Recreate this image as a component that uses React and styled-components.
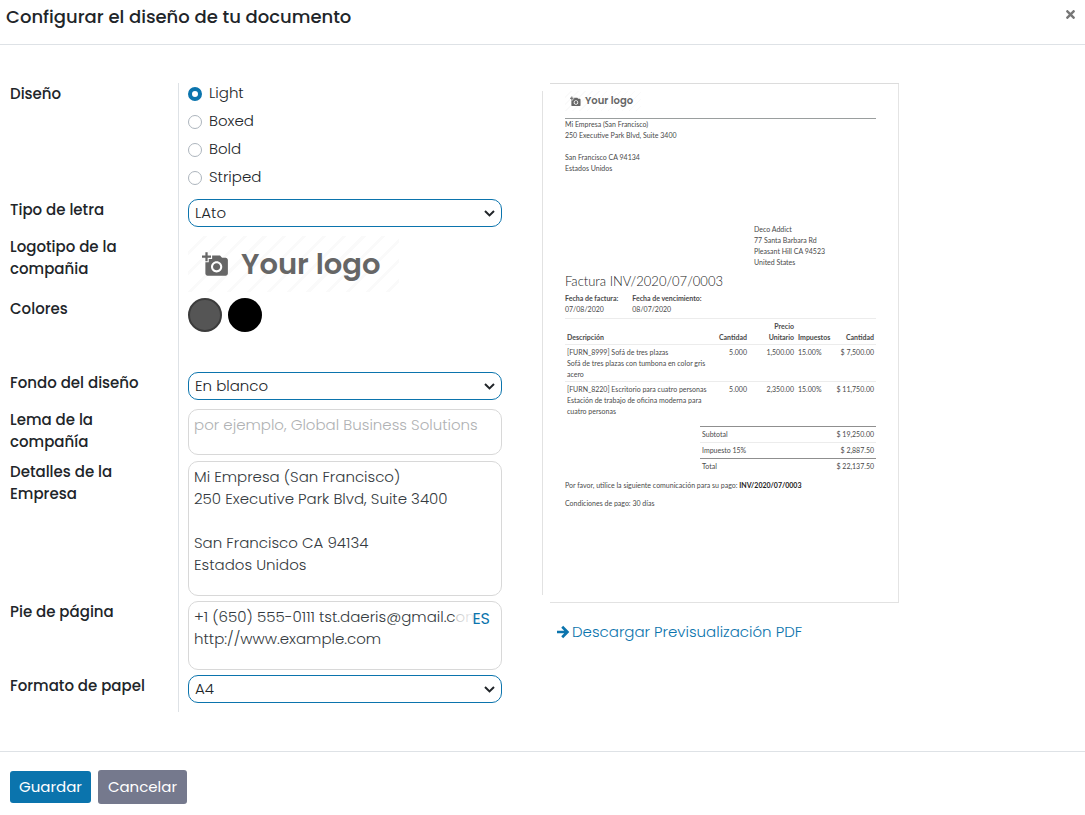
import React, { useState } from "react";
import styled, { createGlobalStyle } from "styled-components";
import { FaTimes } from "react-icons/fa";
import { MdAddAPhoto } from "react-icons/md";

const GlobalStyle = createGlobalStyle`
  *, *::before, *::after { box-sizing: border-box; }
  body {
    margin: 0;
    background: #fff;
    color: #212529;
    font-family: Poppins, Inter, "Liberation Sans", sans-serif;
    font-size: 15px;
    line-height: 22px;
    font-weight: 300;
  }
`;

const Dialog = styled.div`
  display: flex;
  flex-direction: column;
`;

const Header = styled.header`
  display: flex;
  justify-content: space-between;
  align-items: flex-start;
  padding: 5px 8px 15px 6px;
  border-bottom: 1px solid #dee2e6;
`;

const Title = styled.h1`
  margin: 0;
  font-size: 18px;
  line-height: 24px;
  font-weight: 500;
`;

const CloseButton = styled.button`
  display: flex;
  padding: 3px 0;
  border: 0;
  background: none;
  color: #777;
  font-size: 13px;
  cursor: pointer;
`;

const Body = styled.main`
  display: grid;
  grid-template-columns: 1fr 1fr;
  padding: 38px 1px 39px 0;
`;

const Form = styled.form`
  padding: 0 40px 0 10px;
`;

const Row = styled.div`
  display: grid;
  grid-template-columns: 168px minmax(0, 1fr);
`;

const rowLabel = `
  margin: 0;
  padding: 0 30px 0 0;
  font-size: 15px;
  font-weight: 500;
`;
const Label = styled.label`${rowLabel}`;
const GroupLabel = styled.span`${rowLabel}`;

const Field = styled.div`
  padding: 0 0 ${(p) => p.$space || 9}px 9px;
  border-left: 1px solid #dee2e6;
`;

const RadioList = styled.div`
  display: flex;
  flex-direction: column;
  gap: 8px;
`;

const RadioLabel = styled.label`
  display: flex;
  align-items: center;
  gap: 7px;
  line-height: 20px;
`;

const Radio = styled.input`
  appearance: none;
  width: 14px;
  height: 14px;
  margin: 2px 0 0;
  border: 1px solid #adb5bd;
  border-radius: 50%;
  background: #fff;
  &:checked {
    border: 4px solid #0b74ad;
  }
`;

const SelectBox = styled.div`
  display: grid;
  align-items: center;
  > * { grid-area: 1 / 1; }
  > svg {
    justify-self: end;
    margin-right: 7px;
    pointer-events: none;
  }
`;

const Select = styled.select`
  appearance: none;
  width: 100%;
  height: 28px;
  padding: 0 28px 0 6px;
  border: 1px solid #0b74ad;
  border-radius: 10px;
  background: #fff;
  color: #212529;
  font: inherit;
`;

const TextArea = styled.textarea`
  display: block;
  width: 100%;
  height: ${(p) => p.$height}px;
  padding: 4px 5px;
  border: 1px solid #d8d8d8;
  border-radius: 10px;
  background: #fff;
  color: #343a40;
  font: inherit;
  resize: none;
  overflow: hidden;
  &::placeholder { color: #b0b2b4; opacity: 1; }
`;

const Translatable = styled.div`
  position: relative;
`;

const LanguageButton = styled.button`
  position: absolute;
  top: 7px;
  right: 8px;
  padding: 0 4px 0 16px;
  border: 0;
  background: linear-gradient(to right, rgba(255, 255, 255, 0.7), rgba(255, 255, 255, 0.9) 16px);
  color: #0b74ad;
  font: inherit;
  font-size: 16px;
  font-weight: 400;
  cursor: pointer;
`;

const Logo = styled.div`
  display: flex;
  align-items: center;
  width: ${(p) => (p.$small ? 76 : 211)}px;
  height: ${(p) => (p.$small ? 20 : 56)}px;
  padding-left: ${(p) => (p.$small ? 5 : 14)}px;
  gap: ${(p) => (p.$small ? 4 : 12)}px;
  background: repeating-linear-gradient(
    135deg,
    #fff 0 ${(p) => (p.$small ? 4 : 11)}px,
    #fafafa ${(p) => (p.$small ? 4 : 11)}px ${(p) => (p.$small ? 5 : 14)}px
  );
  color: #666;
  font-family: Poppins, Lato, sans-serif;
  font-size: ${(p) => (p.$small ? 10 : 29)}px;
  line-height: 1;
  font-weight: 600;
  white-space: nowrap;
  svg { flex: none; }
`;

const Swatches = styled.div`
  display: flex;
  gap: 6px;
`;

const Swatch = styled.button`
  width: 34px;
  height: 34px;
  padding: 0;
  border: 2px solid ${(p) => p.$edge};
  border-radius: 50%;
  background: ${(p) => p.$color};
`;

const Preview = styled.section`
  display: flex;
  flex-direction: column;
  align-items: flex-start;
`;

const Paper = styled.article`
  width: 100%;
  max-width: 357px;
  min-height: 520px;
  padding: 8px 23px;
  background:
    linear-gradient(#dcdcdc, #dcdcdc) 8px 0 / 100% 1px no-repeat,
    linear-gradient(#e2e2e2, #e2e2e2) 8px 100% / 100% 1px no-repeat,
    linear-gradient(#e2e2e2, #e2e2e2) 0 8px / 1px calc(100% - 16px) no-repeat,
    linear-gradient(#e4e4e4, #e4e4e4) 100% 0 / 1px 100% no-repeat;
  color: #4a4a4a;
  font-family: Lato, sans-serif;
  font-size: 7px;
  line-height: 11px;
  font-weight: 400;
`;

const Letterhead = styled.div`
  padding-bottom: 7px;
  border-bottom: 1px solid #9a9e9e;
`;

const Address = styled.address`
  font-style: normal;
  white-space: pre-line;
`;

const Recipient = styled(Address)`
  margin: 50px 0 3px;
  padding-left: 189px;
`;

const InvoiceTitle = styled.h2`
  margin: 0 0 2px;
  color: #222;
  font-size: 13px;
  line-height: 20px;
  font-weight: 300;
`;

const Dates = styled.dl`
  display: flex;
  gap: 14px;
  margin: 0 0 3px;
  dt { font-weight: 700; }
  dd { margin: 0; }
`;

const Lines = styled.table`
  width: 100%;
  table-layout: fixed;
  border-spacing: 0;
  th, td {
    padding: 2px 2px 1px;
    border-top: 1px solid #ececec;
    vertical-align: top;
    text-align: left;
  }
  th { vertical-align: bottom; }
`;

const Column = styled.col`
  width: ${(p) => p.$width}px;
`;

const Heading = styled.th`
  && { text-align: ${(p) => (p.$end ? "right" : "left")}; }
`;

const Cell = styled.td`
  && {
    text-align: ${(p) => (p.$end ? "right" : "left")};
    white-space: ${(p) => (p.$end ? "nowrap" : "pre-line")};
  }
`;

const Totals = styled.table`
  width: 176px;
  margin: 8px 0 6px auto;
  border-spacing: 0;
`;

const TotalRow = styled.tr`
  th, td {
    padding: 2px;
    border-top: 1px solid ${(p) => (p.$strong ? "#8f8f8f" : "#ececec")};
    font-weight: 400;
    text-align: left;
  }
  td { text-align: right; }
`;

const Note = styled.p`
  margin: 0 0 7px;
  white-space: nowrap;
  strong { color: #222; }
`;

const DownloadLink = styled.a`
  display: flex;
  align-items: center;
  gap: 2px;
  margin: 18px 0 0 14px;
  color: #0b74ad;
  text-decoration: none;
`;

const Footer = styled.footer`
  display: flex;
  align-items: center;
  gap: 7px;
  padding: 18px 10px 11px;
  border-top: 1px solid #dee2e6;
`;

const Button = styled.button`
  height: ${(p) => (p.$primary ? 32 : 34)}px;
  padding: 0 ${(p) => (p.$primary ? 9 : 10)}px;
  border: 0;
  border-radius: 3px;
  background: ${(p) => (p.$primary ? "#0b74ad" : "#75798d")};
  color: #fff;
  font: inherit;
  font-weight: 400;
  cursor: pointer;
`;

const Chevron = () => (
  <svg width="11" height="7" viewBox="0 0 11 7" aria-hidden="true">
    <path d="M1 1L5.500 5.400L10 1" fill="none" stroke="#212529" strokeWidth="2" />
  </svg>
);

const Arrow = () => (
  <svg width="14" height="14" viewBox="0 0 14 14" aria-hidden="true">
    <path d="M1 7H11M6.200 1.800L11.400 7L6.200 12.200" fill="none" stroke="currentColor" strokeWidth="2.700" />
  </svg>
);

function SelectField({ id, label, options }) {
  return (
    <Row>
      <Label htmlFor={id}>{label}</Label>
      <Field>
        <SelectBox>
          <Select id={id}>
            {options.map((o) => <option key={o}>{o}</option>)}
          </Select>
          <Chevron />
        </SelectBox>
      </Field>
    </Row>
  );
}

const company = "Mi Empresa (San Francisco)\n250 Executive Park Blvd, Suite 3400\n\nSan Francisco CA 94134\nEstados Unidos";

const items = [
  ["[FURN_8999] Sofá de tres plazas\nSofá de tres plazas con tumbona en color gris acero", "5.000", "1,500.00", "15.00%", "$ 7,500.00"],
  ["[FURN_8220] Escritorio para cuatro personas\nEstación de trabajo de oficina moderna para cuatro personas", "5.000", "2,350.00", "15.00%", "$ 11,750.00"],
];

function InvoicePreview() {
  return (
    <Paper>
      <Letterhead>
        <Logo $small><MdAddAPhoto size={11} />Your logo</Logo>
      </Letterhead>
      <Address>{company}</Address>
      <Recipient>{"Deco Addict\n77 Santa Barbara Rd\nPleasant Hill CA 94523\nUnited States"}</Recipient>
      <InvoiceTitle>Factura INV/2020/07/0003</InvoiceTitle>
      <Dates>
        <div><dt>Fecha de factura:</dt><dd>07/08/2020</dd></div>
        <div><dt>Fecha de vencimiento:</dt><dd>08/07/2020</dd></div>
      </Dates>
      <Lines>
        <colgroup>
          <col />
          <Column $width={36} />
          <Column $width={47} />
          <Column $width={38} />
          <Column $width={42} />
        </colgroup>
        <thead>
          <tr>
            <Heading>Descripción</Heading>
            <Heading $end>Cantidad</Heading>
            <Heading $end>Precio<br />Unitario</Heading>
            <Heading>Impuestos</Heading>
            <Heading $end>Cantidad</Heading>
          </tr>
        </thead>
        <tbody>
          {items.map((item) => (
            <tr key={item[0]}>
              {item.map((value, i) => (
                <Cell key={i} $end={i === 1 || i === 2 || i === 4}>{value}</Cell>
              ))}
            </tr>
          ))}
        </tbody>
      </Lines>
      <Totals>
        <tbody>
          <TotalRow $strong><th>Subtotal</th><td>$ 19,250.00</td></TotalRow>
          <TotalRow><th>Impuesto 15%</th><td>$ 2,887.50</td></TotalRow>
          <TotalRow $strong><th>Total</th><td>$ 22,137.50</td></TotalRow>
        </tbody>
      </Totals>
      <Note>Por favor, utilice la siguiente comunicación para su pago: <strong>INV/2020/07/0003</strong></Note>
      <Note>Condiciones de pago: 30 días</Note>
    </Paper>
  );
}

export default function App() {
  const [layout, setLayout] = useState("Light");
  return (
    <Dialog>
      <GlobalStyle />
      <Header>
        <Title>Configurar el diseño de tu documento</Title>
        <CloseButton type="button" aria-label="Cerrar"><FaTimes /></CloseButton>
      </Header>
      <Body>
        <Form id="layout-form">
          <Row role="radiogroup" aria-labelledby="layout-label">
            <GroupLabel id="layout-label">Diseño</GroupLabel>
            <Field $space={12}>
              <RadioList>
                {["Light", "Boxed", "Bold", "Striped"].map((name) => (
                  <RadioLabel key={name}>
                    <Radio type="radio" name="layout" checked={layout === name} onChange={() => setLayout(name)} />
                    {name}
                  </RadioLabel>
                ))}
              </RadioList>
            </Field>
          </Row>
          <SelectField id="font" label="Tipo de letra" options={["LAto"]} />
          <Row>
            <GroupLabel>Logotipo de la compañia</GroupLabel>
            <Field $space={6}>
              <Logo><MdAddAPhoto size={27} />Your logo</Logo>
            </Field>
          </Row>
          <Row>
            <GroupLabel>Colores</GroupLabel>
            <Field $space={40}>
              <Swatches>
                <Swatch type="button" aria-label="Color primario" $color="#555" $edge="#3c3c3c" />
                <Swatch type="button" aria-label="Color secundario" $color="#000" $edge="#000" />
              </Swatches>
            </Field>
          </Row>
          <SelectField id="background" label="Fondo del diseño" options={["En blanco"]} />
          <Row>
            <Label htmlFor="tagline">Lema de la compañía</Label>
            <Field $space={6}>
              <TextArea id="tagline" $height={46} placeholder="por ejemplo, Global Business Solutions" />
            </Field>
          </Row>
          <Row>
            <Label htmlFor="details">Detalles de la Empresa</Label>
            <Field $space={5}>
              <TextArea id="details" $height={135} defaultValue={company} />
            </Field>
          </Row>
          <Row>
            <Label htmlFor="footer">Pie de página</Label>
            <Field $space={5}>
              <Translatable>
                <TextArea id="footer" $height={69} defaultValue={"+1 (650) 555-0111 tst.daeris@gmail.com\nhttp://www.example.com"} />
                <LanguageButton type="button">ES</LanguageButton>
              </Translatable>
            </Field>
          </Row>
          <SelectField id="paper" label="Formato de papel" options={["A4"]} />
        </Form>
        <Preview>
          <InvoicePreview />
          <DownloadLink href="#preview"><Arrow />Descargar Previsualización PDF</DownloadLink>
        </Preview>
      </Body>
      <Footer>
        <Button type="submit" form="layout-form" $primary>Guardar</Button>
        <Button type="button">Cancelar</Button>
      </Footer>
    </Dialog>
  );
}
